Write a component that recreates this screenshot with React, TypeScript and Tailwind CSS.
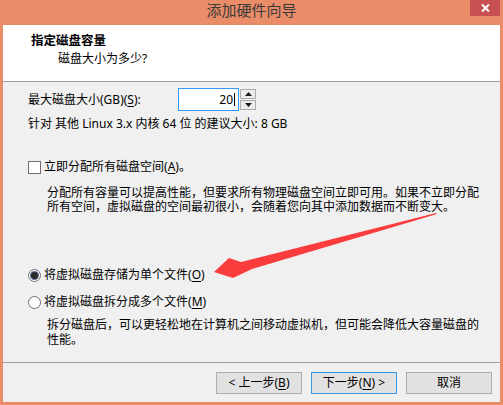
import React from 'react';

const ui = "font-['Noto_Sans','Noto_Sans_CJK_SC',sans-serif]";
// tighter-metric stack for the two-line descriptions
const para = "font-['Liberation_Sans','Noto_Sans_CJK_SC',sans-serif]";

// access-key letter, underlined like Win32 mnemonics
const Key = ({ k }: { k: string }) => (
  <>
    (<span className="underline underline-offset-[2px]">{k}</span>)
  </>
);

const Checkbox = () => (
  <span className="inline-block w-[13px] h-[13px] border border-[#707070] bg-white shrink-0" />
);

const Radio = ({ checked = false }: { checked?: boolean }) => (
  <span className="flex items-center justify-center w-[13px] h-[13px] rounded-full border border-[#707070] bg-white shrink-0">
    {checked && <span className="w-[7px] h-[7px] rounded-full bg-[#2c2c2c] ring-1 ring-[#5a6f8f]" />}
  </span>
);

const WizardButton = ({ children, isDefault = false }: { children: React.ReactNode; isDefault?: boolean }) => (
  <button
    className={`w-[86px] h-[22px] flex items-center justify-center bg-[#e1e1e1] border text-[12px] text-black ${
      isDefault ? 'border-[#3c96e6]' : 'border-[#adadad]'
    }`}
  >
    {children}
  </button>
);

export default function App() {
  return (
    <div className={`${ui} relative w-[503px] h-[405px] bg-[#ea8c68] flex flex-col px-[3px] pb-[3px] overflow-hidden`}>
      {/* Title bar */}
      <div className="relative h-[25px] shrink-0 flex justify-center">
        <span className="text-[15px] leading-[21px] text-[#3a3a3a]">添加硬件向导</span>
        <button className="absolute top-0 right-0 w-[30px] h-[16px] bg-[#c75050] flex items-center justify-center">
          <svg width="9" height="8" viewBox="0 0 9 8">
            <path d="M1 0.5 L8 7.5 M8 0.5 L1 7.5" stroke="white" strokeWidth="2" />
          </svg>
        </button>
      </div>

      {/* Page header */}
      <div className="h-[57px] shrink-0 bg-white border-b border-[#a0a0a0] pt-[8px]">
        <div className="pl-[28px] text-[12.5px] leading-[16px] font-bold text-black">指定磁盘容量</div>
        <div className="pl-[55px] mt-[2px] text-[12px] leading-[16px] text-black">磁盘大小为多少?</div>
      </div>

      {/* Page body */}
      <div className="flex-1 bg-[#f0f0f0] pl-[25px] text-[12px] text-black flex flex-col">
        <div className="mt-[6px] flex items-center h-[23px]">
          <span className="w-[150px] leading-[16px]">
            最大磁盘大小(GB)<Key k="S" />:
          </span>
          <div className="w-[61px] h-[23px] bg-white border border-[#3399ff] flex items-center justify-end pr-[3px]">
            <span className="leading-[16px]">20</span>
            <span className="w-px h-[13px] bg-black ml-px" />
          </div>
          <div className="w-[18px] h-[23px] flex flex-col gap-px p-px">
            <span className="flex-1 bg-[#ececec] border border-[#acacac] flex items-center justify-center">
              <svg width="7" height="4" viewBox="0 0 7 4">
                <path d="M3.5 0 L7 4 L0 4 Z" fill="#1a1a1a" />
              </svg>
            </span>
            <span className="flex-1 bg-[#ececec] border border-[#acacac] flex items-center justify-center">
              <svg width="7" height="4" viewBox="0 0 7 4">
                <path d="M0 0 L7 0 L3.5 4 Z" fill="#1a1a1a" />
              </svg>
            </span>
          </div>
        </div>

        <div className="mt-[5px] leading-[16px] whitespace-nowrap">针对 其他 Linux 3.x 内核 64 位 的建议大小: 8 GB</div>

        <div className="mt-[27px] flex items-center gap-[3px] h-[16px]">
          <Checkbox />
          <span className="leading-[16px]">
            立即分配所有磁盘空间<Key k="A" />。
          </span>
        </div>
        <div className={`${para} mt-[11px] pl-[19px] leading-[14px] whitespace-nowrap`}>
          <div>分配所有容量可以提高性能，但要求所有物理磁盘空间立即可用。如果不立即分配</div>
          <div>所有空间，虚拟磁盘的空间最初很小，会随着您向其中添加数据而不断变大。</div>
        </div>

        <div className="mt-[53px] flex items-center gap-[3px] h-[16px]">
          <Radio checked />
          <span className="leading-[16px]">
            将虚拟磁盘存储为单个文件<Key k="O" />
          </span>
        </div>
        <div className="mt-[11px] flex items-center gap-[3px] h-[16px]">
          <Radio />
          <span className="leading-[16px]">
            将虚拟磁盘拆分成多个文件<Key k="M" />
          </span>
        </div>
        <div className={`${para} mt-[8px] pl-[19px] leading-[15px] whitespace-nowrap`}>
          <div>拆分磁盘后，可以更轻松地在计算机之间移动虚拟机，但可能会降低大容量磁盘的</div>
          <div>性能。</div>
        </div>
      </div>

      {/* Footer buttons */}
      <div className="h-[40px] shrink-0 bg-[#f0f0f0] border-t border-[#a0a0a0] flex justify-end items-start gap-[9px] pt-[9px] pr-[8px]">
        <WizardButton>
          &lt; 上一步<Key k="B" />
        </WizardButton>
        <WizardButton isDefault>
          下一步<Key k="N" /> &gt;
        </WizardButton>
        <WizardButton>取消</WizardButton>
      </div>

      {/* Red callout arrow drawn over the dialog */}
      <svg className="absolute inset-0 pointer-events-none" width="503" height="405" viewBox="0 0 503 405">
        <polygon points="436,213 241,262 229,258 214,272 233,278 252,269 437,214" fill="#fa3c3c" />
      </svg>
    </div>
  );
}
